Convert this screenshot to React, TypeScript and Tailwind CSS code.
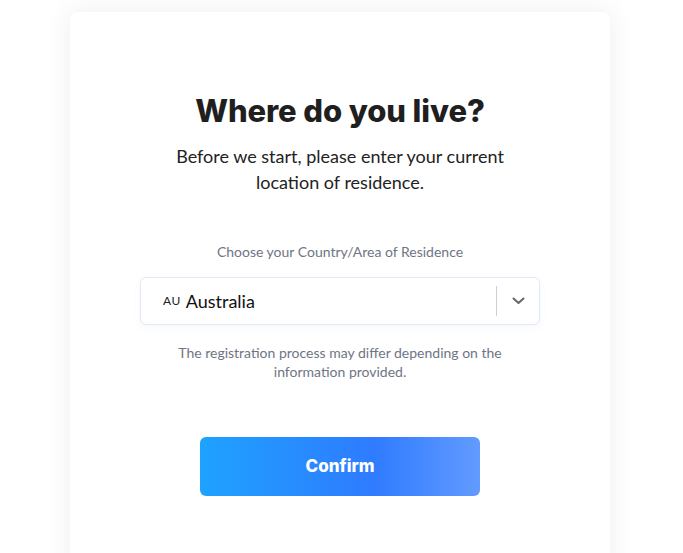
import React from 'react';

export default function App() {
    return (
        <div className="min-h-[553px] bg-white pt-3">
            <div className="ml-[70px] w-[540px] min-h-[560px] rounded-lg bg-white shadow-[0_0_28px_rgba(0,0,0,0.07)] pt-[79px] flex flex-col items-center">
                {/* Heading */}
                <h1 className="font-['Inter',sans-serif] text-[31px] leading-[40px] font-extrabold tracking-[-0.1px] text-[#1f1f1f]">
                    Where do you live?
                </h1>
                <p className="mt-[12px] w-[350px] text-center font-['Lato',sans-serif] text-[18px] leading-[26px] text-[#222]">
                    Before we start, please enter your current location of residence.
                </p>

                {/* Country select */}
                <label className="mt-[47px] font-['Lato',sans-serif] text-[14px] leading-[20px] text-[#6e7585]">
                    Choose your Country/Area of Residence
                </label>
                <div className="mt-[15px] flex h-[48px] w-[400px] items-center rounded-md border border-[#e3e8f6] bg-white shadow-[0_2px_10px_rgba(60,90,160,0.05)]">
                    <div className="flex flex-1 items-center pl-[22px] font-['Lato',sans-serif]">
                        <span className="mr-[5px] text-[12px] tracking-[0.5px] text-[#222]">AU</span>
                        <span className="text-[18px] text-[#111]">Australia</span>
                    </div>
                    <div className="h-[30px] w-px bg-[#cfcfcf]" />
                    <div className="flex w-[42px] items-center justify-center">
                        <svg width="13" height="8" viewBox="0 0 13 8" fill="none">
                            <path d="M1.5 1.5L6.5 6L11.5 1.5" stroke="#666" strokeWidth="2" strokeLinecap="round" strokeLinejoin="round" />
                        </svg>
                    </div>
                </div>
                <p className="mt-[18px] w-[340px] text-center font-['Lato',sans-serif] text-[14px] leading-[19px] text-[#6e7585]">
                    The registration process may differ depending on the information provided.
                </p>

                {/* Confirm */}
                <button className="mt-[56px] h-[59px] w-[280px] rounded-md bg-[linear-gradient(90deg,#1ea2ff_0%,#2f7bff_62%,#629bff_100%)] font-['Inter',sans-serif] text-[17px] font-extrabold text-white">
                    Confirm
                </button>
            </div>
        </div>
    );
}
